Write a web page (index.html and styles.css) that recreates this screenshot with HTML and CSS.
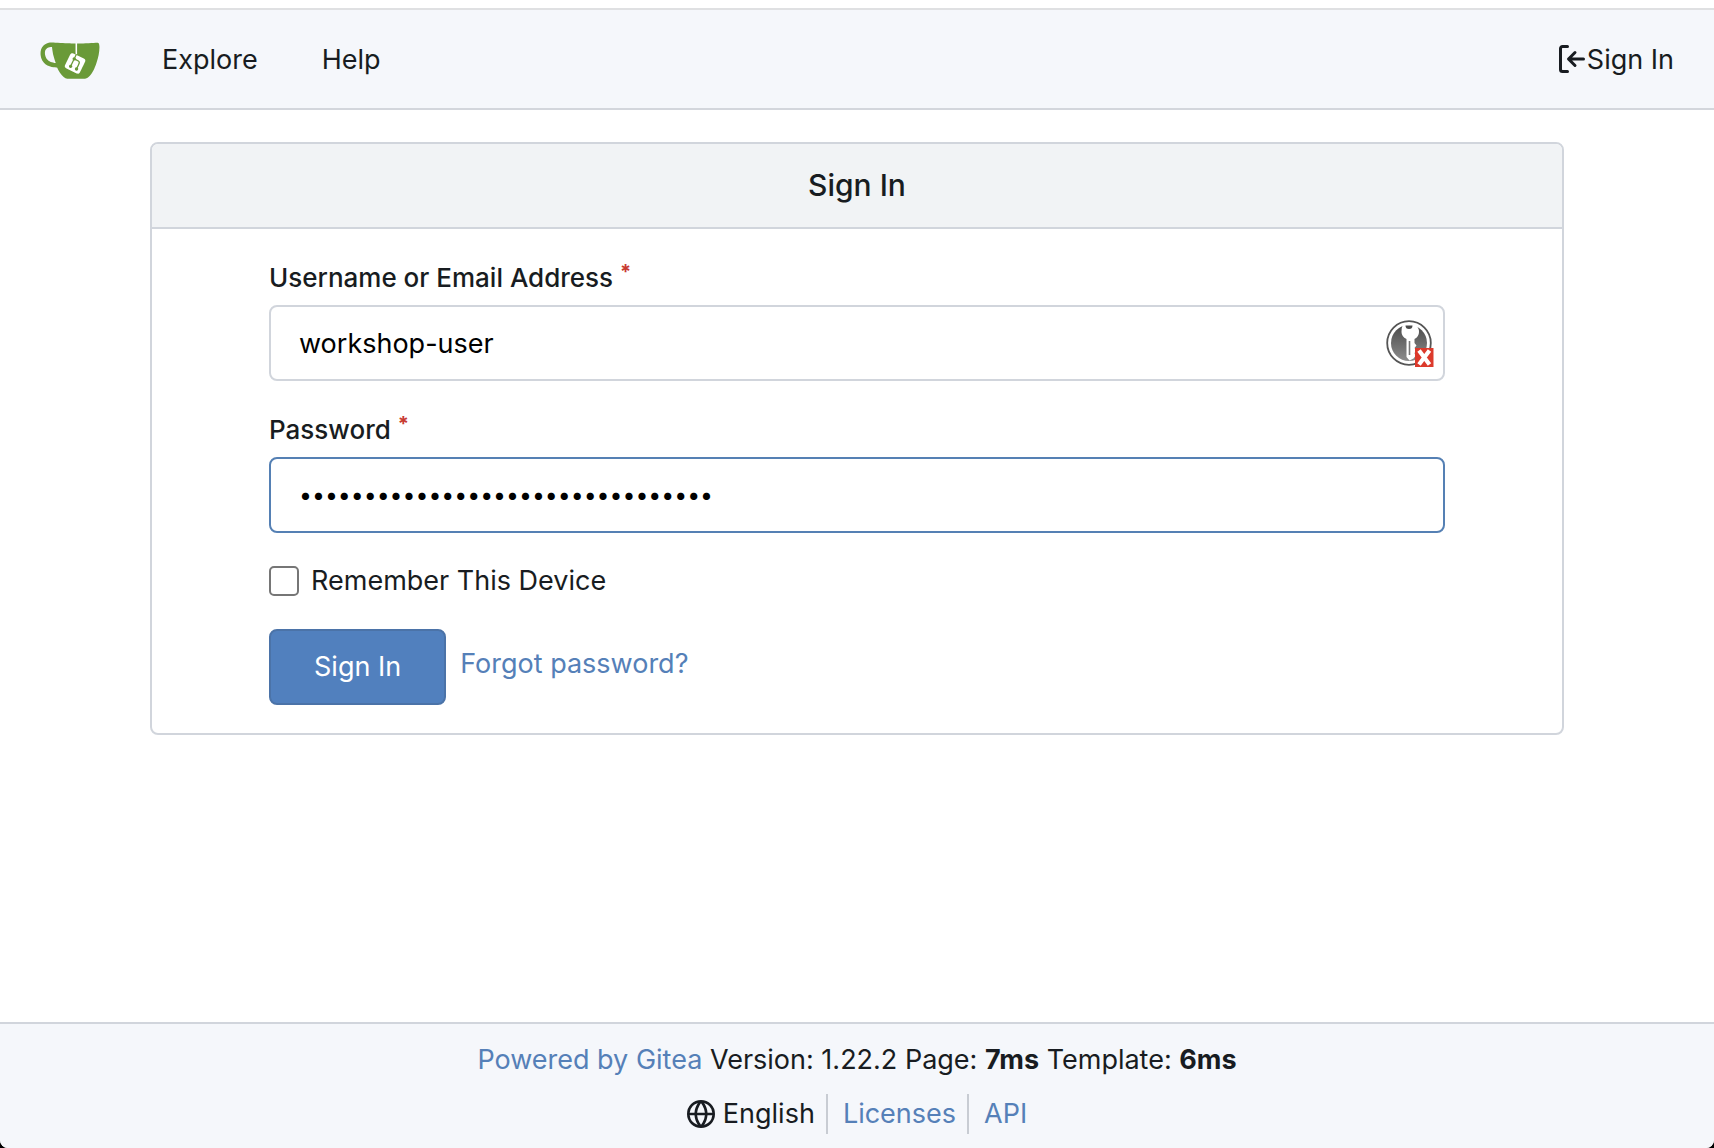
FILE: index.html
```html
<!DOCTYPE html>
<html lang="en">
<head>
<meta charset="utf-8">
<meta name="viewport" content="width=device-width, initial-scale=1">
<title>Sign In - Gitea</title>
<link rel="stylesheet" href="styles.css">
</head>
<body>
<div class="page">
  <nav class="navbar" aria-label="Navigation Bar">
    <a class="logo" href="#" aria-label="Home">
      <svg viewBox="0 0 640 640" width="60" height="60" aria-hidden="true"><path fill="#fff" d="m395.9 484.2-126.9-61c-12.5-6-17.9-21.2-11.8-33.8l61-126.9c6-12.5 21.2-17.9 33.8-11.8 17.2 8.3 27.1 13 27.1 13l-.1-109.2 16.7-.1.1 117.1s57.4 24.2 83.1 40.1c3.7 2.3 10.2 6.8 12.9 14.4 2.1 6.1 2 13.1-1 19.3l-61 126.9c-6.2 12.7-21.4 18.1-33.9 12"/><path fill="#6a9a38" d="M622.7 149.8c-4.1-4.1-9.6-4-9.6-4s-117.2 6.6-177.9 8c-13.3.3-26.5.6-39.6.7v117.2c-5.5-2.6-11.1-5.3-16.6-7.9 0-36.4-.1-109.2-.1-109.2-29 .4-89.2-2.2-89.2-2.2s-141.4-7.1-156.8-8.5c-9.8-.6-22.5-2.1-39 1.5-8.7 1.8-33.5 7.4-53.8 26.9C-4.9 212.4 6.6 276.2 8 285.8c1.7 11.7 6.9 44.2 31.7 72.5 45.8 56.1 144.4 54.8 144.4 54.8s12.1 28.9 30.6 55.5c25 33.1 50.7 58.9 75.7 62 63 0 188.9-.1 188.9-.1s12 .1 28.3-10.3c14-8.5 26.5-23.4 26.5-23.4S547 483 565 451.5c5.5-9.7 10.1-19.1 14.1-28 0 0 55.2-117.1 55.2-231.1-1.1-34.5-9.6-40.6-11.6-42.6M125.6 353.9c-25.9-8.5-36.9-18.7-36.9-18.7S69.6 321.8 60 295.4c-16.5-44.2-1.4-71.2-1.4-71.2s8.4-22.5 38.5-30c13.8-3.7 31-3.1 31-3.1s7.1 59.4 15.7 94.2c7.2 29.2 24.8 77.7 24.8 77.7s-26.1-3.1-43-9.1m300.3 107.6s-6.1 14.5-19.6 15.4c-5.8.4-10.3-1.2-10.3-1.2s-.3-.1-5.3-2.1l-112.9-55s-10.9-5.7-12.8-15.6c-2.2-8.1 2.7-18.1 2.7-18.1L322 273s4.8-9.7 12.2-13c.6-.3 2.3-1 4.5-1.5 8.1-2.1 18 2.8 18 2.8L467.4 315s12.6 5.7 15.3 16.2c1.9 7.4-.5 14-1.8 17.2-6.3 15.4-55 113.1-55 113.1"/><path fill="#6a9a38" d="M326.8 380.1c-8.2.1-15.4 5.8-17.3 13.8s2 16.3 9.1 20c7.7 4 17.5 1.8 22.7-5.4 5.1-7.1 4.3-16.9-1.8-23.1l24-49.1c1.5.1 3.7.2 6.2-.5 4.1-.9 7.1-3.6 7.1-3.6 4.2 1.8 8.6 3.8 13.2 6.1 4.8 2.4 9.3 4.9 13.4 7.3.9.5 1.8 1.1 2.8 1.9 1.6 1.3 3.4 3.1 4.7 5.5 1.9 5.5-1.9 14.9-1.9 14.9-2.3 7.6-18.4 40.6-18.4 40.6-8.1-.2-15.3 5-17.7 12.5-2.6 8.1 1.1 17.3 8.9 21.3s17.4 1.7 22.5-5.3c5-6.8 4.6-16.3-1.1-22.6 1.9-3.7 3.7-7.4 5.6-11.3 5-10.4 13.5-30.4 13.5-30.4.9-1.7 5.7-10.3 2.7-21.3-2.5-11.4-12.6-16.7-12.6-16.7-12.2-7.9-29.2-15.2-29.2-15.2s0-4.1-1.1-7.1c-1.1-3.1-2.8-5.1-3.9-6.3 4.7-9.7 9.4-19.3 14.1-29-4.1-2-8.1-4-12.2-6.1-4.8 9.8-9.7 19.7-14.5 29.5-6.7-.1-12.9 3.5-16.1 9.4-3.4 6.3-2.7 14.1 1.9 19.8z"/></svg>
    </a>
    <a class="nav-link" href="#">Explore</a>
    <a class="nav-link" href="#">Help</a>
    <a class="nav-signin" href="#">
      <svg viewBox="0 0 16 16" width="32" height="32" fill="currentColor" aria-hidden="true"><path d="M2 2.75C2 1.784 2.784 1 3.75 1h2.5a.75.75 0 0 1 0 1.5h-2.5a.25.25 0 0 0-.25.25v10.5c0 .138.112.25.25.25h2.5a.75.75 0 0 1 0 1.5h-2.5A1.75 1.75 0 0 1 2 13.25Zm6.56 4.5h5.69a.75.75 0 0 1 0 1.5H8.56l1.97 1.97a.749.749 0 1 1-1.06 1.06L6.22 8.53a.75.75 0 0 1 0-1.06l3.25-3.25a.749.749 0 1 1 1.06 1.06Z"/></svg>
      <span class="nav-text">Sign In</span>
    </a>
  </nav>

  <main class="content">
    <section class="card">
      <h1 class="card-title">Sign In</h1>
      <form class="form">
        <div class="field">
          <label class="label" for="user_name">Username or Email Address <span class="required">*</span></label>
          <div class="input-wrap">
            <input class="input" id="user_name" type="text" value="workshop-user">
            <svg class="key-badge" viewBox="0 0 48 48" width="48" height="48" aria-hidden="true">
              <defs><linearGradient id="disc" x1="0" y1="0" x2="0" y2="1"><stop offset="0" stop-color="#4a4a4a"/><stop offset="1" stop-color="#8c8c8c"/></linearGradient></defs>
              <circle cx="23" cy="23" r="21.800" fill="#fff" stroke="#555" stroke-width="1.800"/>
              <circle cx="23" cy="23" r="18" fill="url(#disc)"/>
              <path fill="#fff" d="M17 4.500h12q4 2.500 4 7.500 0 4.500-4.500 7v4l2 2.500-2 2.500 2 2.500-2 2.500 1 3-2 2.500-4 2-3-3.500V19q-5-2.500-5-7 0-5 1.500-7.500Z"/>
              <path fill="#4a4a4a" d="M19.500 5.500h7q0 3.500-3.500 3.500t-3.500-3.500Z"/>
              <path stroke="#777" stroke-width="1.600" d="M23.500 21v14"/>
              <path fill="#dc3a2c" d="M29 28h18.500v19H29z"/>
              <path stroke="#fff" stroke-width="4.200" d="m33 30.500 10.500 14m0-14L33 44.500"/>
            </svg>
          </div>
        </div>
        <div class="field">
          <label class="label" for="password">Password <span class="required">*</span></label>
          <input class="input input-password" id="password" type="password" value="workshop-user-password-123456789">
        </div>
        <div class="check-row">
          <input class="checkbox" id="remember" type="checkbox">
          <label for="remember">Remember This Device</label>
        </div>
        <div class="actions">
          <button class="button" type="button">Sign In</button>
          <a class="link forgot" href="#">Forgot password?</a>
        </div>
      </form>
    </section>
  </main>

  <footer class="footer">
    <div class="footer-line">
      <a class="link" href="#">Powered by Gitea</a> Version: 1.22.2 Page: <strong>7ms</strong> Template: <strong>6ms</strong>
    </div>
    <div class="footer-links">
      <a class="footer-item language" href="#">
        <svg viewBox="0 0 16 16" width="28" height="28" fill="currentColor" aria-hidden="true"><path d="M8 0a8 8 0 1 1 0 16A8 8 0 0 1 8 0ZM5.780 8.750a9.640 9.640 0 0 0 1.363 4.177c.255.426.542.832.857 1.215.245-.296.551-.705.857-1.215A9.640 9.640 0 0 0 10.220 8.750Zm4.440-1.500a9.640 9.640 0 0 0-1.363-4.177c-.307-.51-.612-.919-.857-1.215a9.927 9.927 0 0 0-.857 1.215A9.640 9.640 0 0 0 5.780 7.250Zm-5.944 1.500H1.543a6.507 6.507 0 0 0 4.666 5.500c-.123-.181-.24-.365-.352-.552-.715-1.192-1.437-2.874-1.581-4.948Zm-2.733-1.500h2.733c.144-2.074.866-3.756 1.580-4.948.12-.197.237-.381.353-.552a6.507 6.507 0 0 0-4.666 5.500Zm10.181 1.500c-.144 2.074-.866 3.756-1.580 4.948-.12.197-.237.381-.353.552a6.507 6.507 0 0 0 4.666-5.500Zm2.733-1.500a6.507 6.507 0 0 0-4.666-5.500c.123.181.24.365.353.552.714 1.192 1.436 2.874 1.580 4.948Z"/></svg>
        <span>English</span>
      </a>
      <a class="footer-item link" href="#">Licenses</a>
      <a class="footer-item link" href="#">API</a>
    </div>
  </footer>
</div>
</body>
</html>
```
FILE: styles.css
```css
*, *::before, *::after {
  box-sizing: border-box;
}

html {
  background: #000;
}

body {
  margin: 0;
  color: #181c21;
  font-family: Inter, "Liberation Sans", sans-serif;
  font-size: 27px;
  line-height: 40px;
}

a {
  color: inherit;
  text-decoration: none;
}

svg {
  display: block;
  flex: none;
}

.page {
  display: flex;
  flex-direction: column;
  min-height: 100vh;
  padding-top: 8px;
  overflow: hidden;
  background: #fff;
  border-radius: 0 0 8px 8px;
}

.navbar {
  display: flex;
  align-items: center;
  padding: 19px 40px;
  background: #f5f7fb;
  border-top: 2px solid #dfe0e2;
  border-bottom: 2px solid #d3d6dc;
}

.logo {
  margin-right: 30px;
}

.nav-link {
  padding: 2px 32px 0;
}

.nav-signin {
  display: flex;
  align-items: center;
  margin-left: auto;
}

.nav-text {
  padding-top: 2px;
}

.content {
  flex: 1;
  padding: 32px 150px;
}

.card {
  border: 2px solid #d1d5dc;
  border-radius: 8px;
}

.card-title {
  margin: 0;
  padding: 21px 28px 22px;
  background: #f1f3f5;
  border-bottom: 2px solid #d1d5dc;
  border-radius: 6px 6px 0 0;
  font-size: 30px;
  font-weight: 500;
  line-height: 40px;
  text-align: center;
}

.form {
  display: flex;
  flex-direction: column;
  gap: 28px;
  padding: 28px 8.3%;
}

.field {
  display: flex;
  flex-direction: column;
  gap: 7px;
}

.label {
  padding-top: 1px;
  font-size: 26px;
  font-weight: 500;
}

.required {
  color: #c83a32;
  font-size: 20px;
  font-weight: 700;
  line-height: 1;
  vertical-align: 8px;
}

.input-wrap {
  position: relative;
}

.input {
  display: block;
  width: 100%;
  height: 76px;
  padding: 0 28px;
  color: #000;
  background: #fff;
  border: 2px solid #d1d5dc;
  border-radius: 8px;
  outline: none;
  font: inherit;
}

.input-password {
  border-color: #5580b4;
  font-size: 23px;
}

.key-badge {
  position: absolute;
  top: 15px;
  right: 11px;
}

.check-row {
  display: flex;
  align-items: center;
  gap: 12px;
}

.checkbox {
  width: 30px;
  height: 30px;
  margin: 0;
  appearance: none;
  background: #fff;
  border: 2px solid #767676;
  border-radius: 5px;
}

.checkbox:checked {
  background: #5180be;
}

.actions {
  display: flex;
  align-items: center;
  gap: 14px;
}

.button {
  height: 76px;
  padding: 0 43px;
  color: #fff;
  background: #5180be;
  border: 2px solid #4b73a8;
  border-radius: 8px;
  font: inherit;
}

.link {
  color: #5580b8;
}

.forgot {
  padding-bottom: 6px;
}

.footer {
  display: flex;
  flex-direction: column;
  align-items: center;
  gap: 14px;
  padding: 16px 40px 14px;
  background: #f5f7fb;
  border-top: 2px solid #d1d5dc;
}

.footer-line strong {
  font-weight: 700;
}

.footer-links {
  display: flex;
}

.footer-item {
  padding-right: 11px;
}

.footer-item:last-child {
  padding-right: 0;
}

.footer-item + .footer-item {
  padding-left: 15px;
  border-left: 2px solid #c8ccd3;
}

.language {
  display: flex;
  align-items: center;
  gap: 8px;
}
```
